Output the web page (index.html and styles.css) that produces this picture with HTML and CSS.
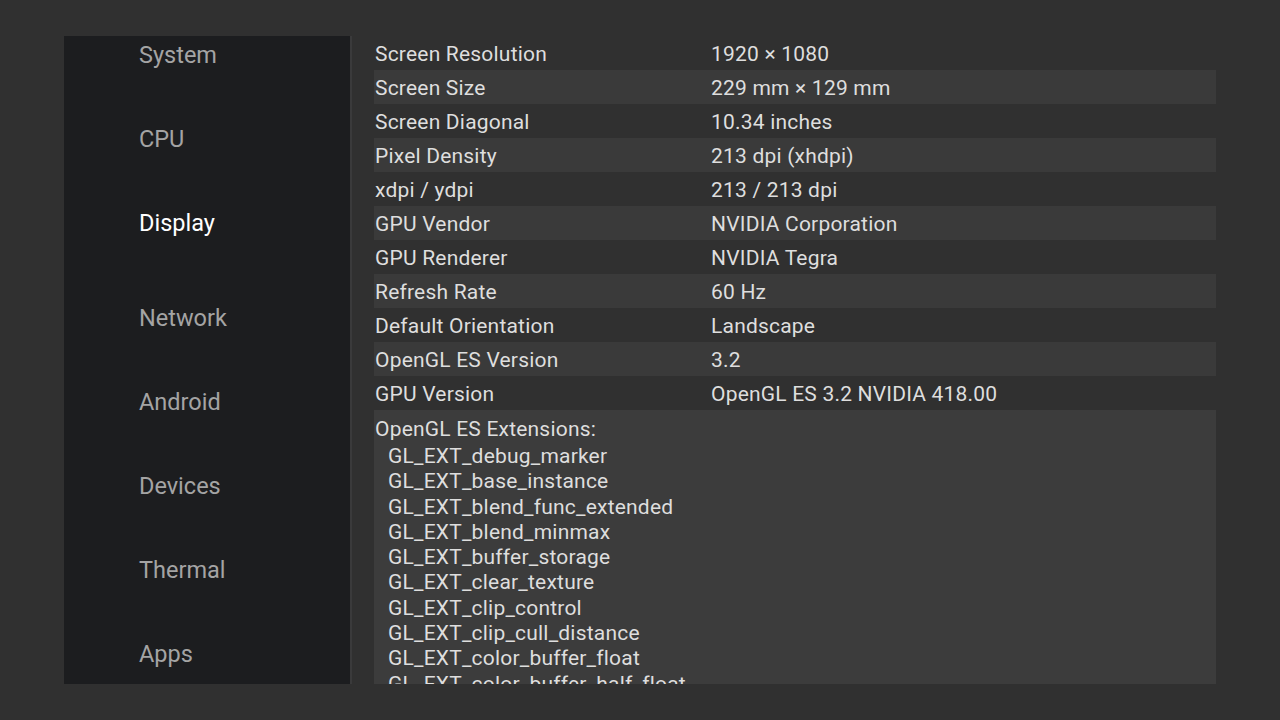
FILE: index.html
```html
<!DOCTYPE html>
<html lang="en">
<head>
  <meta charset="UTF-8" />
  <title>Device Info - Display</title>
  <link rel="stylesheet" href="styles.css">
</head>
<body>
  <div class="screen">

    <!-- Side menu -->
    <nav class="side-menu">
      <ul>
        <li>System</li>
        <li>CPU</li>
        <li class="active">Display</li>
        <li>Network</li>
        <li>Android</li>
        <li>Devices</li>
        <li>Thermal</li>
        <li>Apps</li>
      </ul>
    </nav>

    <!-- Display details -->
    <main class="details">
      <div class="row"><span class="label">Screen Resolution</span><span class="value">1920 × 1080</span></div>
      <div class="row"><span class="label">Screen Size</span><span class="value">229 mm × 129 mm</span></div>
      <div class="row"><span class="label">Screen Diagonal</span><span class="value">10.34 inches</span></div>
      <div class="row"><span class="label">Pixel Density</span><span class="value">213 dpi (xhdpi)</span></div>
      <div class="row"><span class="label">xdpi / ydpi</span><span class="value">213 / 213 dpi</span></div>
      <div class="row"><span class="label">GPU Vendor</span><span class="value">NVIDIA Corporation</span></div>
      <div class="row"><span class="label">GPU Renderer</span><span class="value">NVIDIA Tegra</span></div>
      <div class="row"><span class="label">Refresh Rate</span><span class="value">60 Hz</span></div>
      <div class="row"><span class="label">Default Orientation</span><span class="value">Landscape</span></div>
      <div class="row"><span class="label">OpenGL ES Version</span><span class="value">3.2</span></div>
      <div class="row"><span class="label">GPU Version</span><span class="value">OpenGL ES 3.2 NVIDIA 418.00</span></div>

      <section class="extensions">
        <h2>OpenGL ES Extensions:</h2>
        <ul>
          <li>GL_EXT_debug_marker</li>
          <li>GL_EXT_base_instance</li>
          <li>GL_EXT_blend_func_extended</li>
          <li>GL_EXT_blend_minmax</li>
          <li>GL_EXT_buffer_storage</li>
          <li>GL_EXT_clear_texture</li>
          <li>GL_EXT_clip_control</li>
          <li>GL_EXT_clip_cull_distance</li>
          <li>GL_EXT_color_buffer_float</li>
          <li>GL_EXT_color_buffer_half_float</li>
        </ul>
      </section>
    </main>

  </div>
</body>
</html>
```

FILE: styles.css
```css
/* Reset & Base */
* {
  box-sizing: border-box;
  margin: 0;
  padding: 0;
}

body {
  font-family: Roboto, 'Noto Sans', sans-serif;
  background-color: #303030;
  color: #dedede;
  width: 1280px;
  height: 720px;
  overflow: hidden;
}

ul {
  list-style: none;
}

.screen {
  display: flex;
  padding: 36px 64px;
  height: 720px;
}

/* Side menu */
.side-menu {
  width: 288px;
  height: 648px;
  background-color: #1c1d1f;
  border-right: 2px solid #3a3a3b;
  overflow: hidden;
}

.side-menu li {
  height: 84px;
  line-height: 38px;
  padding-left: 75px;
  font-size: 23.5px;
  color: #a4a4a4;
}

.side-menu li.active {
  height: 95px;
  color: #ffffff;
}

/* Details */
.details {
  width: 842px;
  height: 648px;
  margin-left: 22px;
  overflow: hidden;
}

.row {
  display: flex;
  height: 34px;
  line-height: 34px;
  padding-top: 1px;
  font-size: 21px;
  letter-spacing: 0.2px;
}

.row:nth-child(even) {
  background-color: #3a3a3a;
}

.row .label {
  width: 337px;
  padding-left: 1px;
}

/* Extensions */
.extensions {
  background-color: #3c3c3c;
  padding-top: 5px;
  font-size: 21px;
  letter-spacing: 0.2px;
  height: 274px;
  overflow: hidden;
}

.extensions h2 {
  font-size: 21px;
  font-weight: normal;
  line-height: 28px;
  padding-left: 1px;
}

.extensions ul {
  margin-top: 1px;
  padding-left: 14px;
}

.extensions li {
  line-height: 25.3px;
}
```
